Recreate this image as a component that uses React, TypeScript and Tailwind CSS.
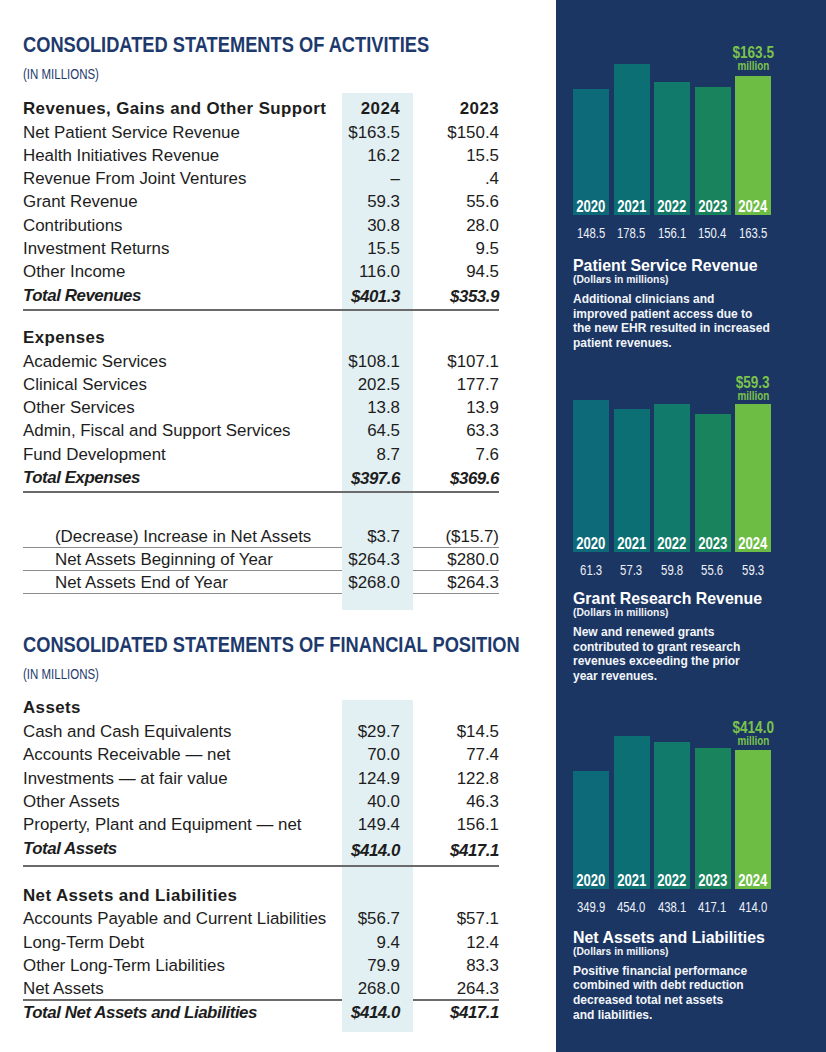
import React from "react";

const SHADE = "bg-[#e3f0f3]";
const GRID = "grid grid-cols-[319px_71px_86px]";

type RowProps = {
  label?: string;
  a?: string;
  b?: string;
  kind?: "normal" | "head" | "total";
  indent?: boolean;
  h?: string;
  extra?: string;
};

function Row({ label = "", a = "", b = "", kind = "normal", indent = false, h = "h-[23.3px]", extra = "" }: RowProps) {
  const weight =
    kind === "head"
      ? "font-bold tracking-[0.4px]"
      : kind === "total"
      ? "font-bold italic tracking-[-0.45px]"
      : "font-normal";
  return (
    <div className={`${GRID} ${h} ${extra} items-center text-[16.9px] leading-[23.3px] text-[#1d1d1d] ${weight}`}>
      <div className={`whitespace-nowrap ${indent ? "pl-[32px]" : ""}`}>{label}</div>
      <div className={`${SHADE} h-full flex items-center justify-end pr-[13px] whitespace-nowrap`}>{a}</div>
      <div className="h-full flex items-center justify-end whitespace-nowrap">{b}</div>
    </div>
  );
}

function Spacer({ h }: { h: string }) {
  return (
    <div className={`${GRID} ${h}`}>
      <div />
      <div className={SHADE} />
      <div />
    </div>
  );
}

function Title({ children, mt }: { children: React.ReactNode; mt: string }) {
  return (
    <>
      <div
        className={`${mt} origin-left scale-x-[0.83] font-bold text-[22px] leading-[26px] text-[#1e3a6d] whitespace-nowrap`}
      >
        {children}
      </div>
      <div className="mt-[9px] origin-left scale-x-[0.82] text-[14px] leading-[14px] text-[#1e3a6d] whitespace-nowrap">
        (IN MILLIONS)
      </div>
    </>
  );
}

type Chart = {
  label: string;
  mt: string;
  gap: string;
  titleMt: string;
  bars: { year: string; value: string; h: number }[];
  title: string;
  desc: string[];
};

const BAR_COLORS = ["bg-[#0d6a78]", "bg-[#0c6f74]", "bg-[#127a6b]", "bg-[#19835d]", "bg-[#6dbd45]"];

const charts: Chart[] = [
  {
    label: "$163.5",
    mt: "mt-[44px]",
    gap: "gap-[4px]",
    titleMt: "mt-[19px]",
    bars: [
      { year: "2020", value: "148.5", h: 126 },
      { year: "2021", value: "178.5", h: 151 },
      { year: "2022", value: "156.1", h: 133 },
      { year: "2023", value: "150.4", h: 128 },
      { year: "2024", value: "163.5", h: 139 },
    ],
    title: "Patient Service Revenue",
    desc: [
      "Additional clinicians and",
      "improved patient access due to",
      "the new EHR resulted in increased",
      "patient revenues.",
    ],
  },
  {
    label: "$59.3",
    mt: "mt-[23px]",
    gap: "gap-[2px]",
    titleMt: "mt-[15px]",
    bars: [
      { year: "2020", value: "61.3", h: 152 },
      { year: "2021", value: "57.3", h: 143 },
      { year: "2022", value: "59.8", h: 148 },
      { year: "2023", value: "55.6", h: 138 },
      { year: "2024", value: "59.3", h: 148 },
    ],
    title: "Grant Research Revenue",
    desc: [
      "New and renewed grants",
      "contributed to grant research",
      "revenues exceeding the prior",
      "year revenues.",
    ],
  },
  {
    label: "$414.0",
    mt: "mt-[35px]",
    gap: "gap-[3px]",
    titleMt: "mt-[17px]",
    bars: [
      { year: "2020", value: "349.9", h: 118 },
      { year: "2021", value: "454.0", h: 153 },
      { year: "2022", value: "438.1", h: 147 },
      { year: "2023", value: "417.1", h: 141 },
      { year: "2024", value: "414.0", h: 139 },
    ],
    title: "Net Assets and Liabilities",
    desc: [
      "Positive financial performance",
      "combined with debt reduction",
      "decreased total net assets",
      "and liabilities.",
    ],
  },
];

function ChartBlock({ c }: { c: Chart }) {
  return (
    <div className={c.mt}>
      <div className="flex items-end gap-[4.5px]">
        {c.bars.map((b, i) => (
          <div key={b.year} className={`w-[36px] flex flex-col items-center ${c.gap}`}>
            {i === 4 && (
              <div className="flex flex-col items-center text-[#7cc34b] font-bold">
                <span className="inline-block scale-x-[0.82] text-[16.5px] leading-[16px] whitespace-nowrap">
                  {c.label}
                </span>
                <span className="inline-block scale-x-[0.82] text-[12px] leading-[12px]">million</span>
              </div>
            )}
            <div
              className={`w-[36px] ${BAR_COLORS[i]} flex items-end justify-center pb-[1px]`}
              style={{ height: `${b.h}px` }}
            >
              <span className="inline-block scale-x-[0.82] font-bold text-[16px] leading-[15px] text-white">
                {b.year}
              </span>
            </div>
          </div>
        ))}
      </div>
      <div className="flex gap-[4.5px] mt-[11px]">
        {c.bars.map((b) => (
          <div key={b.year} className="w-[36px] flex justify-center text-[14.5px] leading-[14px] text-[#eef2f7]">
            <span className="inline-block scale-x-[0.78] whitespace-nowrap">{b.value}</span>
          </div>
        ))}
      </div>
      <div className={`${c.titleMt} font-bold text-[15.9px] leading-[14px] text-white whitespace-nowrap`}>
        {c.title}
      </div>
      <div className="mt-[1px] font-bold text-[10.3px] leading-[12px] text-[#eef2f7] whitespace-nowrap">
        (Dollars in millions)
      </div>
      <div className="mt-[6px] font-bold text-[12px] leading-[14.7px] text-[#f2f5f9]">
        {c.desc.map((d) => (
          <div key={d} className="whitespace-nowrap">
            {d}
          </div>
        ))}
      </div>
    </div>
  );
}

export default function App() {
  return (
    <div className="flex w-[826px] h-[1052px] bg-white overflow-hidden font-['Liberation_Sans',Arial,sans-serif]">
      <div className="w-[556px] shrink-0 pl-[23px] pt-[32px]">
        <Title mt="mt-0">CONSOLIDATED STATEMENTS OF ACTIVITIES</Title>

        <div className="mt-[12px] w-[476px]">
          <Spacer h="h-[4.3px]" />
          <Row label="Revenues, Gains and Other Support" a="2024" b="2023" kind="head" />
          <Row label="Net Patient Service Revenue" a="$163.5" b="$150.4" />
          <Row label="Health Initiatives Revenue" a="16.2" b="15.5" />
          <Row label="Revenue From Joint Ventures" a="–" b=".4" />
          <Row label="Grant Revenue" a="59.3" b="55.6" />
          <Row label="Contributions" a="30.8" b="28.0" />
          <Row label="Investment Returns" a="15.5" b="9.5" />
          <Row label="Other Income" a="116.0" b="94.5" />
          <Row
            label="Total Revenues"
            a="$401.3"
            b="$353.9"
            kind="total"
            h="h-[27.3px]"
            extra="items-start border-b-2 border-[#6a6a6a]"
          />
          <Spacer h="h-[15.3px]" />
          <Row label="Expenses" kind="head" />
          <Row label="Academic Services" a="$108.1" b="$107.1" />
          <Row label="Clinical Services" a="202.5" b="177.7" />
          <Row label="Other Services" a="13.8" b="13.9" />
          <Row label="Admin, Fiscal and Support Services" a="64.5" b="63.3" />
          <Row label="Fund Development" a="8.7" b="7.6" />
          <Row
            label="Total Expenses"
            a="$397.6"
            b="$369.6"
            kind="total"
            h="h-[27px]"
            extra="items-start border-b-2 border-[#6a6a6a]"
          />
          <Spacer h="h-[32px]" />
          <Row label="(Decrease) Increase in Net Assets" a="$3.7" b="($15.7)" indent h="h-[23px]" extra="border-b border-[#8c8c8c]" />
          <Row label="Net Assets Beginning of Year" a="$264.3" b="$280.0" indent h="h-[23px]" extra="border-b border-[#8c8c8c]" />
          <Row label="Net Assets End of Year" a="$268.0" b="$264.3" indent h="h-[23px]" extra="border-b border-[#8c8c8c]" />
          <Spacer h="h-[16px]" />
        </div>

        <Title mt="mt-[22px]">CONSOLIDATED STATEMENTS OF FINANCIAL POSITION</Title>

        <div className="mt-[19px] w-[476px]">
          <div className={`${GRID} h-[20px] text-[16.9px] font-bold tracking-[0.4px] text-[#1d1d1d]`}>
            <div className="leading-[15px] whitespace-nowrap">Assets</div>
            <div className={SHADE} />
            <div />
          </div>
          <Row label="Cash and Cash Equivalents" a="$29.7" b="$14.5" />
          <Row label="Accounts Receivable — net" a="70.0" b="77.4" />
          <Row label="Investments — at fair value" a="124.9" b="122.8" />
          <Row label="Other Assets" a="40.0" b="46.3" />
          <Row label="Property, Plant and Equipment — net" a="149.4" b="156.1" />
          <Row
            label="Total Assets"
            a="$414.0"
            b="$417.1"
            kind="total"
            h="h-[30.5px]"
            extra="items-start border-b-2 border-[#6a6a6a]"
          />
          <Spacer h="h-[17px]" />
          <Row label="Net Assets and Liabilities" kind="head" />
          <Row label="Accounts Payable and Current Liabilities" a="$56.7" b="$57.1" />
          <Row label="Long-Term Debt" a="9.4" b="12.4" />
          <Row label="Other Long-Term Liabilities" a="79.9" b="83.3" />
          <Row label="Net Assets" a="268.0" b="264.3" h="h-[23.3px]" extra="items-start border-b-2 border-[#6a6a6a]" />
          <Row label="Total Net Assets and Liabilities" a="$414.0" b="$417.1" kind="total" />
          <Spacer h="h-[8px]" />
        </div>
      </div>

      <div className="flex-1 bg-[#1c3664] pl-[17px]">
        {charts.map((c) => (
          <ChartBlock key={c.title} c={c} />
        ))}
      </div>
    </div>
  );
}
